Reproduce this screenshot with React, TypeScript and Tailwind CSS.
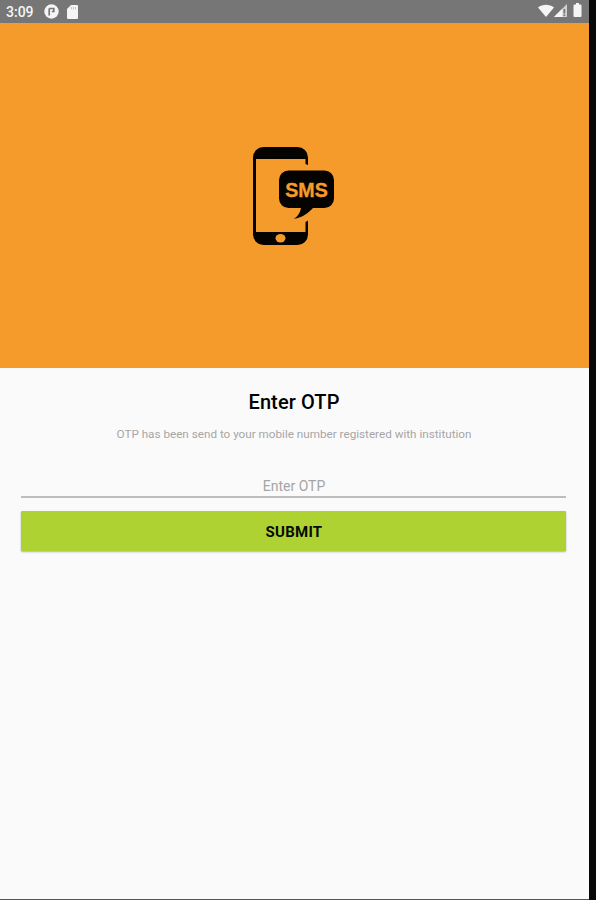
const StatusBar = () => {
  return (
    <header className="flex h-[23px] shrink-0 items-center justify-between bg-[#767676] pl-[6px] pr-[7px] text-[#f5f5f5]">
      <div className="flex items-center">
        <span className="w-[28px] whitespace-nowrap text-[14px] font-medium leading-[22px]">
          3:09
        </span>
        <svg className="ml-[10px] size-[15px]" viewBox="0 0 15 15">
          <circle cx="7.5" cy="7.5" r="7.2" fill="currentColor" />
          <path
            d="M5.2 11.5V4.500M5.2 4.5h4.6v3H7.8"
            fill="none"
            stroke="#767676"
            strokeWidth="1.7"
          />
        </svg>
        <svg className="ml-[8px] h-[14px] w-[11px]" viewBox="0 0 11 14">
          <path
            d="M4 0h6a1 1 0 0 1 1 1v12a1 1 0 0 1-1 1H1a1 1 0 0 1-1-1V4z"
            fill="currentColor"
          />
          <path d="M4.3 2v2.4M6.4 2v2.4M8.5 2v2.4" stroke="#c4c4c4" />
        </svg>
      </div>
      <div className="flex items-center pb-[3px]">
        <svg className="h-[13px] w-[16px]" viewBox="0 0 16 13">
          <path d="M0 3.5C4.5-.3 11.5-.3 16 3.5L8 13z" fill="currentColor" />
        </svg>
        <svg className="h-[13px] w-[13px]" viewBox="0 0 13 13">
          <path d="M13 0v13H0z" fill="#d0d0d0" />
          <path d="M8.5 4.5V13H0z" fill="currentColor" />
          <path d="M10.3 5v4.5M10.3 10.5V12" stroke="#767676" strokeWidth="1.7" />
        </svg>
        <svg className="ml-[6px] h-[14px] w-[9px]" viewBox="0 0 9 14">
          <path
            d="M3 0h3v1.5h1.5A1 1 0 0 1 8.5 2.5V13a1 1 0 0 1-1 1h-6a1 1 0 0 1-1-1V2.5a1 1 0 0 1 1-1H3z"
            fill="currentColor"
          />
        </svg>
      </div>
    </header>
  );
};

const SmsIcon = () => {
  return (
    <svg className="h-[98px] w-[81px]" viewBox="0 0 81 98">
      <path
        d="M10.5 0h34A10.5 10.5 0 0 1 55 10.5V18l-2.5-1V12H3v73h49.5V75l2.5-1.5v14A10.5 10.5 0 0 1 44.5 98h-34A10.5 10.5 0 0 1 0 87.5v-77A10.5 10.5 0 0 1 10.5 0z"
        fill="#050300"
      />
      <ellipse cx="27.5" cy="91.3" rx="5" ry="4.2" fill="#f49b2c" />
      <path
        d="M35.5 23.5h36a9.5 9.5 0 0 1 9.5 9.5v18.5a9.5 9.5 0 0 1-9.5 9.5H60c-4.5 5-10.5 9.5-19 10.8C45 69 47 66 48 61H35.5a9.5 9.5 0 0 1-9.5-9.5V33a9.5 9.5 0 0 1 9.5-9.5z"
        fill="#050300"
      />
      <text
        x="53.5"
        y="49.5"
        textAnchor="middle"
        textLength="42.5"
        lengthAdjust="spacingAndGlyphs"
        className="font-['Liberation_Sans'] text-[21px] font-bold"
        fill="#f49b2c"
        stroke="#f49b2c"
        strokeWidth="0.4"
      >
        SMS
      </text>
    </svg>
  );
};

const App = () => {
  return (
    <div className="h-[900px] w-[596px] overflow-hidden bg-[#080808] pr-[7px] font-[Roboto,sans-serif]">
      <div className="flex h-full flex-col border-b border-[#555] bg-[#fafafa]">
        <StatusBar />

        <div className="flex h-[345px] shrink-0 justify-center bg-[#f49b2c] pr-[2px] pt-[124px]">
          <SmsIcon />
        </div>

        <main className="flex flex-col pl-[21px] pr-[23px] pt-[22px]">
          <h1 className="pl-[1px] text-center text-[20px] font-medium leading-[24px] tracking-[0.1px] text-black">
            Enter OTP
          </h1>
          <p className="mt-[12px] whitespace-nowrap pl-[1px] text-center text-[11.7px] leading-[16px] text-[#a6a6a6]">
            OTP has been send to your mobile number registered with institution
          </p>
          <input
            type="text"
            placeholder="Enter OTP"
            className="mt-[34px] h-[22px] w-full border-b-2 border-[#bdbdbd] bg-transparent pl-[1px] text-center text-[14px] outline-none placeholder:text-[#a5a5a5]"
          />
          <button className="mt-[13px] h-[40px] rounded-[1px] bg-[#afd233] pl-[1px] pt-[2px] text-[15px] font-bold tracking-[0.25px] text-[#080a00] shadow-[0_1px_2px_rgba(0,0,0,0.3)]">
            SUBMIT
          </button>
        </main>
      </div>
    </div>
  );
};

export default App;
